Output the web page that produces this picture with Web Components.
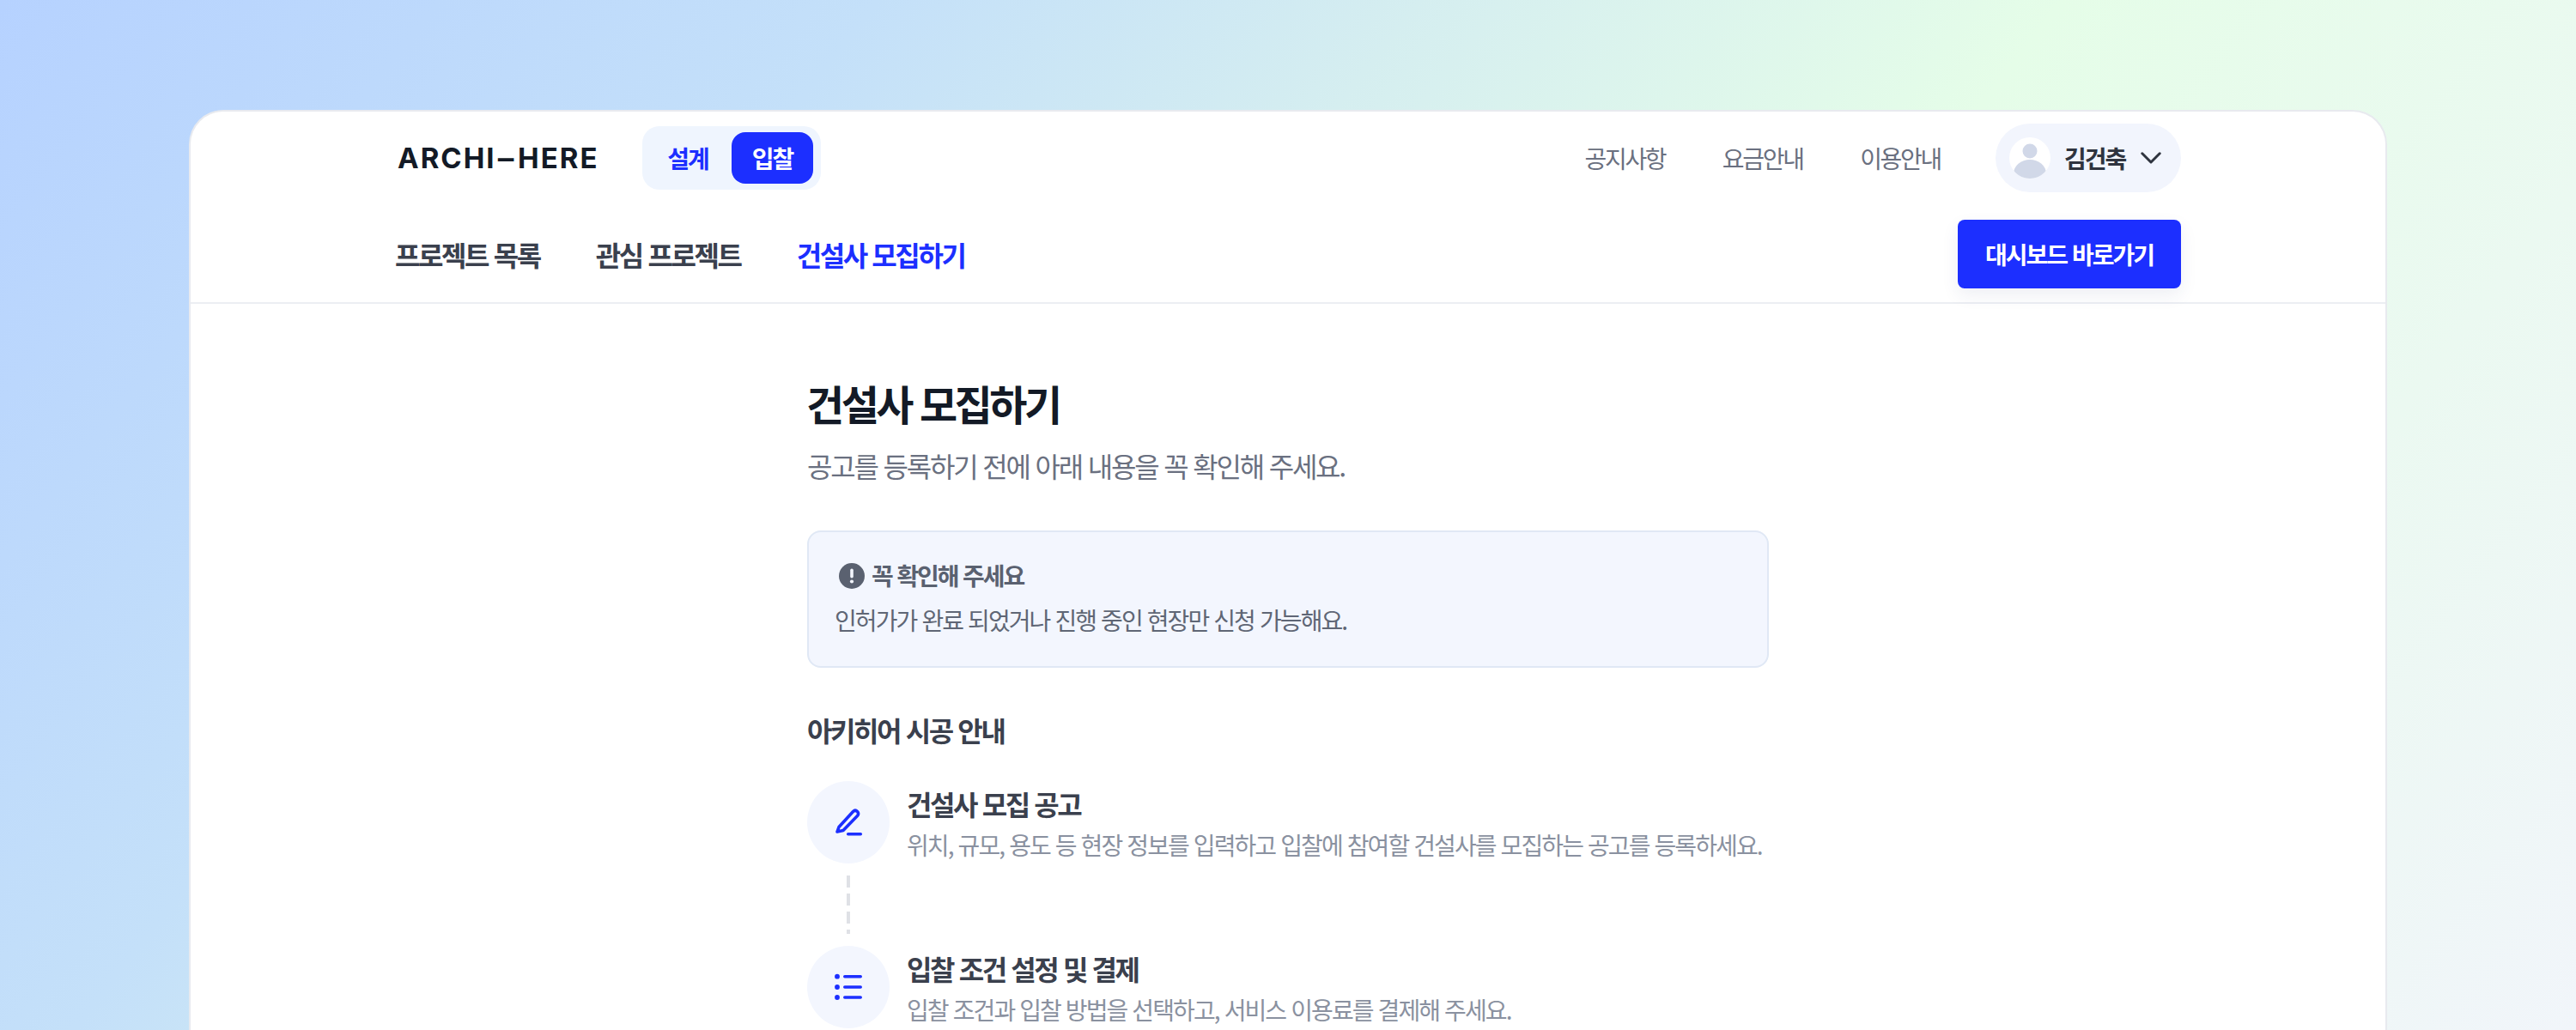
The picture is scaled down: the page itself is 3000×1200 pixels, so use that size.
<!DOCTYPE html>
<html lang="ko">
<head>
<meta charset="utf-8">
<title>건설사 모집하기</title>
<style>
  html, body { margin: 0; height: 100%; }
  body {
    overflow: hidden;
    font-family: "Noto Sans CJK KR", "Noto Sans", sans-serif;
  }
</style>
</head>
<body>

<app-page>
  <site-header>
    <mode-switch slot="left"></mode-switch>
  </site-header>
  <recruit-intro></recruit-intro>
</app-page>

<script>
// small helper, every component is just a template + shadow root
function define(name, html) {
  const tpl = document.createElement('template')
  tpl.innerHTML = html
  customElements.define(name, class extends HTMLElement {
    constructor() {
      super()
      this.attachShadow({ mode: 'open' }).append(tpl.content.cloneNode(true))
    }
  })
}

define('app-page', `
  <style>
    :host {
      display: block;
      height: 1200px;
      box-sizing: border-box;
      padding: 128px 220px 0;
      overflow: hidden;
      background: linear-gradient(128deg, #b6d2ff 0%, #c4e0f9 26%, #d5eef0 42%, #e5fde8 61%, #f1f5fa 100%);
    }
    .card {
      background: #fff;
      border: 2px solid #e8eaef;
      border-bottom: 0;
      border-radius: 40px 40px 0 0;
      height: 1200px;
      box-sizing: border-box;
    }
  </style>
  <div class="card"><slot></slot></div>
`)

define('mode-switch', `
  <style>
    :host {
      display: inline-flex;
      align-items: center;
      box-sizing: border-box;
      height: 74px;
      width: 208px;
      padding: 7px 9px 7px 0;
      background: #eff5fe;
      border-radius: 20px;
      font-size: 28px;
      font-weight: 700;
      letter-spacing: -2px;
    }
    span { display: flex; align-items: center; justify-content: center; height: 60px; border-radius: 16px; box-sizing: border-box; }
    .off { color: #1c2fff; width: 104px; padding-left: 2px; }
    .on { color: #fff; background: #1c2fff; width: 95px; }
  </style>
  <span class="off">설계</span><span class="on">입찰</span>
`)

define('user-chip', `
  <style>
    :host {
      display: flex;
      align-items: center;
      box-sizing: border-box;
      width: 216px;
      height: 80px;
      padding-left: 16px;
      background: #f2f5fd;
      border-radius: 40px;
      font-size: 28px;
      font-weight: 700;
      letter-spacing: -2px;
      color: #2f343f;
    }
    svg.face { display: block; margin-right: 16px; }
    svg.arrow { display: block; margin-left: 18px; }
  </style>
  <svg class="face" width="48" height="48" viewBox="0 0 48 48">
    <clipPath id="round"><circle cx="24" cy="24" r="24"/></clipPath>
    <circle cx="24" cy="24" r="24" fill="#fff"/>
    <circle cx="24" cy="16" r="8.500" fill="#d1d8e8"/>
    <ellipse cx="24" cy="42" rx="19" ry="16" fill="#d1d8e8" clip-path="url(#round)"/>
  </svg>
  <span>김건축</span>
  <svg class="arrow" width="24" height="14" viewBox="0 0 24 14" fill="none">
    <path d="M1.800 1.800L12 12L22.200 1.800" stroke="#2f343f" stroke-width="3" stroke-linecap="round" stroke-linejoin="round"/>
  </svg>
`)

define('site-header', `
  <style>
    :host {
      display: block;
      box-sizing: border-box;
      height: 224px;
      padding: 14px 238px 0 238px;
      border-bottom: 2px solid #eceef3;
    }
    .top, .bottom { display: flex; align-items: center; justify-content: space-between; }
    .top { height: 80px; }
    .bottom { height: 80px; margin-top: 32px; }
    .left, .links, .tabs { display: flex; align-items: center; }
    .logo {
      font-family: Inter, sans-serif;
      font-weight: 700;
      font-size: 33px;
      letter-spacing: 2px;
      color: #131a26;
      margin: 0 51px 0 3px;
      width: 234px;
      white-space: nowrap;
    }
    .logo b { display: inline-block; font-weight: 700; transform: scaleX(1.700); margin: 0 4px; }
    .links { gap: 66.500px; margin-left: auto; margin-right: 64px; font-size: 28px; letter-spacing: -2.300px; color: #6a7080; }
    .tabs { gap: 65px; font-size: 32px; font-weight: 700; letter-spacing: -2.400px; color: #3a404d; }
    .tabs .now { color: #1c2fff; }
    .cta {
      display: flex;
      align-items: center;
      justify-content: center;
      width: 260px;
      height: 80px;
      background: #1c2fff;
      border-radius: 8px;
      color: #fff;
      font-size: 28px;
      font-weight: 700;
      letter-spacing: -2px;
      box-shadow: 0 8px 20px rgba(40, 50, 120, .08);
    }
  </style>
  <div class="top">
    <div class="left">
      <div class="logo">ARCHI<b>-</b>HERE</div>
      <slot name="left"></slot>
    </div>
    <div class="links"><span>공지사항</span><span>요금안내</span><span>이용안내</span></div>
    <user-chip></user-chip>
  </div>
  <div class="bottom">
    <div class="tabs"><span>프로젝트 목록</span><span>관심 프로젝트</span><span class="now">건설사 모집하기</span></div>
    <div class="cta">대시보드 바로가기</div>
  </div>
`)

define('notice-box', `
  <style>
    :host {
      display: block;
      box-sizing: border-box;
      height: 160px;
      padding: 30px 30px;
      background: #f3f6fe;
      border: 2px solid #e0e8f5;
      border-radius: 16px;
    }
    .head { display: flex; align-items: center; gap: 8px; height: 40px; padding-left: 5px; font-size: 28px; font-weight: 700; letter-spacing: -2.100px; color: #5a6170; }
    .head svg { margin-top: 2px; }
    .body { margin-top: 12px; height: 40px; line-height: 40px; font-size: 28px; letter-spacing: -1.900px; color: #5f6675; }
    svg { display: block; }
  </style>
  <div class="head">
    <svg width="30" height="30" viewBox="0 0 30 30">
      <circle cx="15" cy="15" r="15" fill="#5a6170"/>
      <rect x="13.200" y="6.500" width="3.600" height="11" rx="1.800" fill="#f3f6fe"/>
      <circle cx="15" cy="21.500" r="2.100" fill="#f3f6fe"/>
    </svg>
    <span><slot name="title"></slot></span>
  </div>
  <div class="body"><slot></slot></div>
`)

define('step-item', `
  <style>
    :host { display: grid; grid-template-columns: 96px 1fr; column-gap: 20px; height: 192px; }
    .left { display: flex; flex-direction: column; align-items: center; }
    .dot { width: 96px; height: 96px; flex: none; border-radius: 50%; background: #f3f6fe; display: flex; align-items: center; justify-content: center; }
    .line {
      width: 4px;
      height: 68px;
      margin-top: 14px;
      background: repeating-linear-gradient(180deg, #dfe1e6 0 14px, transparent 14px 21px);
    }
    :host([last]) .line { display: none; }
    .title { margin-top: 4px; height: 44px; line-height: 44px; font-size: 32px; font-weight: 700; letter-spacing: -2.400px; color: #3a404d; }
    .desc { margin-top: 6px; height: 40px; line-height: 40px; font-size: 28px; letter-spacing: -1.900px; color: #8a91a0; }
  </style>
  <div class="left">
    <div class="dot"><slot name="icon"></slot></div>
    <div class="line"></div>
  </div>
  <div>
    <div class="title"><slot name="title"></slot></div>
    <div class="desc"><slot></slot></div>
  </div>
`)

define('recruit-intro', `
  <style>
    :host { display: block; width: 1120px; padding-top: 83px; margin-left: 718px; }
    h1 { margin: 0 0 0 -1px; height: 64px; line-height: 64px; font-size: 48px; font-weight: 700; letter-spacing: -3.500px; color: #131a26; }
    .sub { margin-top: 19px; height: 44px; line-height: 44px; font-size: 32px; letter-spacing: -2.200px; color: #6a7080; }
    notice-box { margin-top: 54px; }
    h2 { margin: 50px 0 38px; height: 44px; line-height: 44px; font-size: 32px; font-weight: 700; letter-spacing: -2.400px; color: #3a404d; }
    svg { display: block; }
  </style>
  <h1>건설사 모집하기</h1>
  <div class="sub">공고를 등록하기 전에 아래 내용을 꼭 확인해 주세요.</div>
  <notice-box>
    <span slot="title">꼭 확인해 주세요</span>
    인허가가 완료 되었거나 진행 중인 현장만 신청 가능해요.
  </notice-box>
  <h2>아키히어 시공 안내</h2>
  <step-item>
    <svg slot="icon" width="36" height="36" viewBox="0 0 36 36" fill="none" stroke="#1c2fff" stroke-width="3.600" stroke-linecap="round" stroke-linejoin="round">
      <path d="M5 29L7 23.500L23.500 5.500C25 4 27 4 28.500 5.500C30 7 30 9 28.500 10.500L12 27.500z"/>
      <path d="M17.700 31.700H32.300"/>
    </svg>
    <span slot="title">건설사 모집 공고</span>
    위치, 규모, 용도 등 현장 정보를 입력하고 입찰에 참여할 건설사를 모집하는 공고를 등록하세요.
  </step-item>
  <step-item last>
    <svg slot="icon" width="36" height="36" viewBox="0 0 36 36" fill="none" stroke="#1c2fff" stroke-width="3.600" stroke-linecap="round">
      <path d="M13.800 5.700H32.200M13.800 18H32.200M13.800 30H32.200"/>
      <g fill="#1c2fff" stroke="none"><circle cx="5" cy="5.700" r="2.900"/><circle cx="5" cy="18" r="2.900"/><circle cx="5" cy="30" r="2.900"/></g>
    </svg>
    <span slot="title">입찰 조건 설정 및 결제</span>
    입찰 조건과 입찰 방법을 선택하고, 서비스 이용료를 결제해 주세요.
  </step-item>
`)
</script>
</body>
</html>
